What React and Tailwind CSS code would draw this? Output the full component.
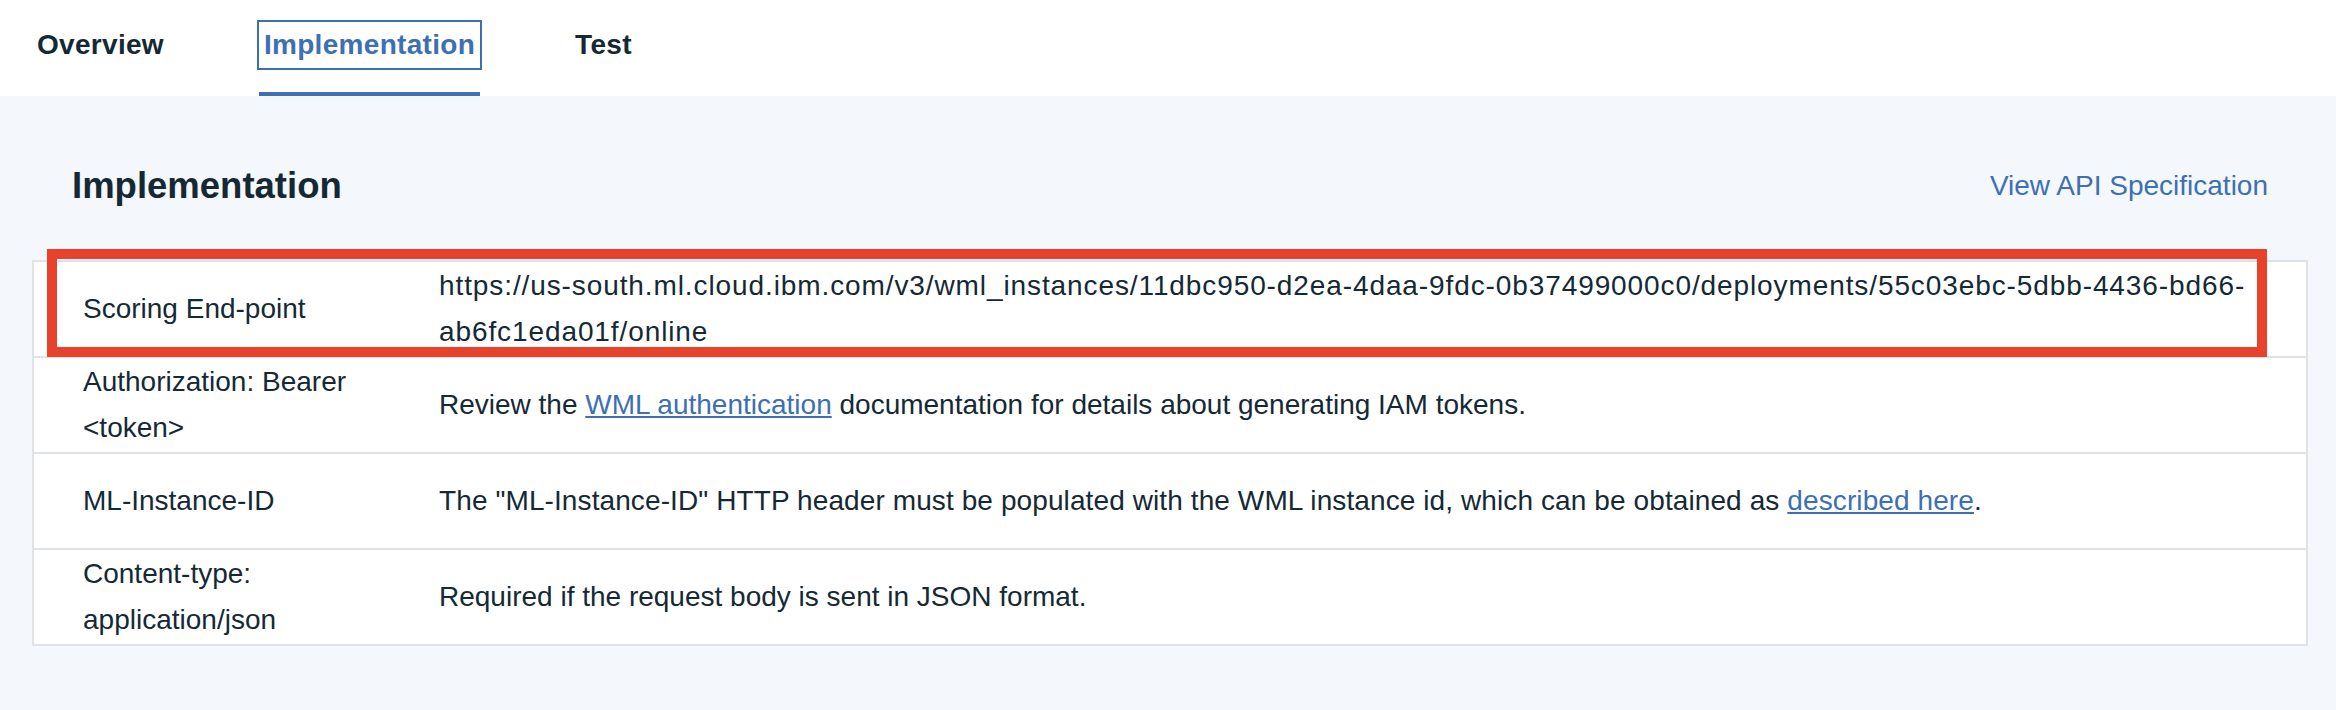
import React from 'react';

const TABS = [
  { id: 'overview', label: 'Overview' },
  { id: 'implementation', label: 'Implementation', active: true },
  { id: 'test', label: 'Test' },
];

function Link({ children }) {
  return <a className="text-[#3d70b2] underline decoration-2 underline-offset-[2px]">{children}</a>;
}

const ROWS = [
  {
    label: 'Scoring End-point',
    value: (
      <span className="whitespace-nowrap tracking-[0.9px]">
        https://us-south.ml.cloud.ibm.com/v3/wml_instances/11dbc950-d2ea-4daa-9fdc-0b37499000c0/deployments/55c03ebc-5dbb-4436-bd66-
        <br />
        ab6fc1eda01f/online
      </span>
    ),
  },
  {
    label: 'Authorization: Bearer <token>',
    value: (
      <span>
        Review the <Link>WML authentication</Link> documentation for details about generating IAM tokens.
      </span>
    ),
  },
  {
    label: 'ML-Instance-ID',
    value: (
      <span className="tracking-[0.1px]">
        The "ML-Instance-ID" HTTP header must be populated with the WML instance id, which can be obtained as{' '}
        <Link>described here</Link>.
      </span>
    ),
  },
  {
    label: 'Content-type: application/json',
    value: <span>Required if the request body is sent in JSON format.</span>,
  },
];

export default function App() {
  return (
    <div className="min-h-[710px] bg-[#f4f7fb] font-['Liberation_Sans',Arial,sans-serif] text-[#152935]">
      <nav className="bg-white h-[96px] flex pl-[30px] gap-[86px]">
        {TABS.map((tab) => (
          <div key={tab.id} className="flex flex-col h-full">
            <div
              className={`mt-[20px] h-[50px] flex items-center px-[5px] border-2 text-[28px] font-bold tracking-[0.3px] ${
                tab.active ? 'border-[#3d70b2] text-[#3d70b2]' : 'border-transparent text-[#152935]'
              }`}
            >
              {tab.label}
            </div>
            <div className={`mt-auto mx-[2px] h-[4px] ${tab.active ? 'bg-[#3d70b2]' : ''}`} />
          </div>
        ))}
      </nav>

      <div className="pl-[32px] pr-[28px] pt-[44px]">
        <div className="h-[92px] px-[40px] flex items-center justify-between">
          <h2 className="text-[36.5px] font-bold">Implementation</h2>
          <a className="text-[28px] text-[#3d70b2]">View API Specification</a>
        </div>

        <div className="relative mt-[28px]">
          <div className="bg-white border-2 border-[#dfe3e6]">
            {ROWS.map((row, i) => (
              <div
                key={row.label}
                className={`h-[94px] flex items-center text-[28px] leading-[46px] ${
                  i < ROWS.length - 1 ? 'border-b-2 border-[#dfe3e6] box-content' : ''
                }`}
              >
                <div className="w-[357px] shrink-0 pl-[49px] pr-[20px]">{row.label}</div>
                <div className="pl-[48px]">{row.value}</div>
              </div>
            ))}
          </div>
          {/* annotation box round the first row */}
          <div className="absolute left-[15px] top-[-11px] w-[2220px] h-[108px] border-[10px] border-[#e8412c]" />
        </div>
      </div>
    </div>
  );
}
